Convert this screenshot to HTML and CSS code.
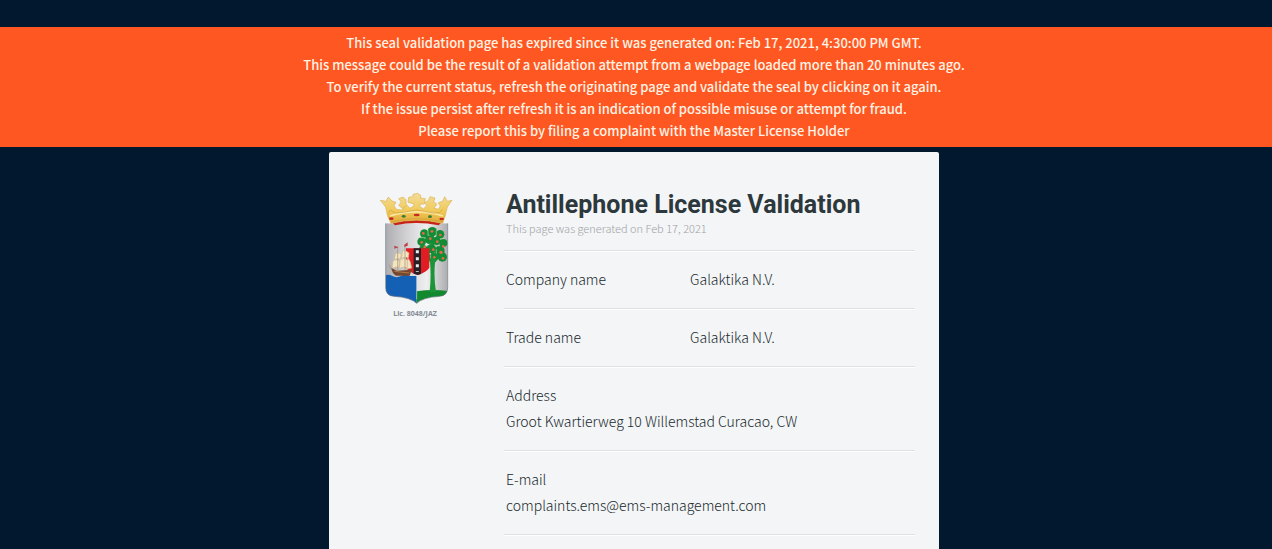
FILE: index.html
```html
<!DOCTYPE html>
<html lang="en">
<head>
<meta charset="utf-8">
<title>Antillephone License Validation</title>
<link rel="stylesheet" href="styles.css">
</head>
<body>
<div class="page">
  <div class="banner" role="alert">
    <p>This seal validation page has expired since it was generated on: Feb 17, 2021, 4:30:00 PM GMT.</p>
    <p>This message could be the result of a validation attempt from a webpage loaded more than 20 minutes ago.</p>
    <p>To verify the current status, refresh the originating page and validate the seal by clicking on it again.</p>
    <p>If the issue persist after refresh it is an indication of possible misuse or attempt for fraud.</p>
    <p>Please report this by filing a complaint with the Master License Holder</p>
  </div>
  <div class="content">
  <main class="card">
    <div class="seal">
      <svg class="arms" viewBox="0 0 270 360" aria-hidden="true">
        <defs>
          <linearGradient id="silver" x1="0" x2="1">
            <stop offset="0" stop-color="#a9a9ad"/><stop offset=".35" stop-color="#d2d2d5"/><stop offset=".65" stop-color="#efeff0"/><stop offset="1" stop-color="#a5a5a8"/>
          </linearGradient>
          <linearGradient id="gold" x1="0" x2="0" y1="0" y2="1">
            <stop offset="0" stop-color="#f3dc9a"/><stop offset=".6" stop-color="#f0ca58"/><stop offset="1" stop-color="#dfa834"/>
          </linearGradient>
          <clipPath id="shield"><path d="M47 112H233V305Q233 329 208 331Q158 334 140 352Q122 334 72 331Q47 329 47 305Z"/></clipPath>
        </defs>
        <g clip-path="url(#shield)">
          <path fill="url(#silver)" d="M40 105H240V355H40Z"/>
          <path fill="#1460b4" d="M40 270Q55 263 67 270T93 270T120 270H140V355H40Z"/>
          <path fill="#12882f" d="M140 316Q190 308 240 316V355H140Z"/>
          <path fill="none" stroke="#fff" stroke-width="2" opacity=".6" d="M140 262V340"/>
        </g>
        <path fill="none" stroke="#64727c" stroke-width="2" d="M47 112V305Q47 329 72 331Q122 334 140 352Q158 334 208 331Q233 329 233 305V112"/>
        <path fill="#1c9438" d="M179 318Q184 270 180 228L158 205L165 200L183 216V145H192V216L208 201L214 207L195 230Q191 275 198 318Z"/>
        <g fill="#158b35">
          <circle cx="163" cy="143" r="13"/><circle cx="187" cy="137" r="14"/><circle cx="210" cy="145" r="13"/><circle cx="155" cy="167" r="13"/><circle cx="178" cy="161" r="13"/><circle cx="199" cy="165" r="13"/><circle cx="220" cy="171" r="12"/><circle cx="160" cy="190" r="13"/><circle cx="184" cy="188" r="14"/><circle cx="209" cy="194" r="15"/><circle cx="217" cy="213" r="14"/><circle cx="197" cy="210" r="11"/><circle cx="173" cy="209" r="9"/>
        </g>
        <g fill="none" stroke="#a6d5a8" stroke-width="2">
          <path d="M174 132V149M199 132V150M150 155L166 155M166 177L175 178M192 177L209 180M171 202L180 205M199 190V203M211 158L222 158"/>
        </g>
        <g fill="#e8694a">
          <circle cx="160" cy="142" r="4"/><circle cx="186" cy="136" r="4"/><circle cx="211" cy="147" r="4"/><circle cx="155" cy="169" r="4"/><circle cx="181" cy="158" r="4"/><circle cx="202" cy="167" r="4"/><circle cx="220" cy="181" r="4"/><circle cx="164" cy="183" r="4"/><circle cx="190" cy="191" r="4"/><circle cx="213" cy="199" r="5"/><circle cx="219" cy="217" r="4"/><circle cx="193" cy="214" r="4"/>
        </g>
        <path fill="#e31b23" d="M108 187H178V244Q175 257 143 267Q111 257 108 244Z"/>
        <path fill="#272125" d="M131 187H153V264L143 267L131 263Z"/>
        <path stroke="#eee" stroke-width="9" stroke-dasharray="9 12" d="M142 193V258"/>
        <g fill="#f2e5c1" stroke="#cbb690" stroke-width="2">
          <path d="M76 203Q87 197 94 205L91 219Q82 216 73 221Z"/><path d="M98 194Q109 193 117 201L115 216Q105 211 94 217Z"/><path d="M69 224Q80 217 89 226L86 245Q76 240 66 248Z"/><path d="M91 220Q105 214 114 224L112 247Q100 239 88 248Z"/><path d="M113 216Q122 223 125 246L111 249Z"/>
        </g>
        <path fill="none" stroke="#a58b70" stroke-width="2" d="M83 180V252M105 178V252M66 251L56 236"/>
        <path fill="#bc3f42" d="M73 179L85 184L73 188ZM103 176L113 169V179L103 183Z"/>
        <path fill="#74482e" d="M64 246L80 254L125 251L119 269H78Q66 262 64 246Z"/>
        <path fill="none" stroke="#c69451" stroke-width="2" d="M73 256L118 261"/>
        <path fill="#c52417" d="M68 111Q138 93 213 111L206 118Q138 104 75 118Z"/>
        <g fill="url(#gold)" stroke="#dcb452" stroke-width="2">
          <path d="M53 91L47 63L31 43L48 46L55 33L66 45L78 49L72 59L79 70L97 72L106 60L98 68L86 58L94 48L86 38L99 33L108 41L108 54L120 67L132 59L130 53L114 49L116 34L129 32L129 25L143 22L153 29L151 36L166 38L163 54L149 55L150 62L161 69L170 58L164 50L175 44L180 32L195 36L191 47L201 55L192 66L205 70L211 60L205 50L218 46L224 32L232 46L246 43L232 63L225 91L218 112Q140 93 63 112Z"/>
        </g>
        <path fill="none" stroke="#f9e6a1" stroke-width="5" d="M60 90Q139 65 219 90"/>
        <path fill="none" stroke="#cf9d3c" stroke-width="2" d="M55 82L61 72L76 81L99 79L116 76L140 72L164 76L190 81L208 80L218 70M64 108Q140 87 218 108"/>
        <g fill="#c52b21"><ellipse cx="64" cy="98" rx="7" ry="4"/><ellipse cx="140" cy="87" rx="9" ry="4"/><ellipse cx="215" cy="99" rx="7" ry="4"/></g>
        <g fill="#3b7c35"><ellipse cx="101" cy="91" rx="6" ry="4"/><ellipse cx="180" cy="92" rx="6" ry="4"/></g>
      </svg>
      <p class="license">Lic. 8048/JAZ</p>
    </div>
    <div class="details">
      <header class="heading">
        <h1>Antillephone License Validation</h1>
        <p>This page was generated on Feb 17, 2021</p>
      </header>
      <dl class="fields">
        <div class="row split"><dt>Company name</dt><dd>Galaktika N.V.</dd></div>
        <div class="row split"><dt>Trade name</dt><dd>Galaktika N.V.</dd></div>
        <div class="row"><dt>Address</dt><dd>Groot Kwartierweg 10 Willemstad Curacao, CW</dd></div>
        <div class="row"><dt>E-mail</dt><dd>complaints.ems@ems-management.com</dd></div>
      </dl>
    </div>
  </main>
  </div>
</div>
</body>
</html>
```
FILE: styles.css
```css
* { box-sizing: border-box; }
body, h1, p, dl, dd { margin: 0; }
body {
  background: #02182f;
  color: #20282b;
  font: 300 14px/26px "Noto Sans CJK SC", "Open Sans", sans-serif;
}
.page {
  min-height: 100vh;
  padding-top: 27px;
  display: flex;
  flex-direction: column;
}
.banner {
  padding: 5px 4px 5px 0;
  background: #ff5722;
  color: #fff3e4;
  font-size: 13px;
  font-weight: 500;
  line-height: 22px;
  text-align: center;
}
.content {
  flex: 1;
  padding: 5px 4px 0 0;
  display: flex;
  justify-content: center;
}
.card {
  width: 100%;
  max-width: 610px;
  padding-right: 24px;
  display: grid;
  grid-template-columns: 175px 1fr;
  background: #f3f5f7;
  border-radius: 2px 2px 0 0;
}
.seal {
  padding: 34px 3px 0 0;
  display: flex;
  flex-direction: column;
  align-items: center;
}
.arms { width: 90px; height: 120px; }
.license {
  color: #858b95;
  font: 700 7px/16px "Open Sans", sans-serif;
}
.heading, .row {
  padding-left: 2px;
  border-bottom: 1px solid #dde0e4;
  box-shadow: 0 1px 0 #fff;
}
.heading { padding-top: 37px; padding-bottom: 15px; }
.heading h1 {
  color: #2d383c;
  font: 700 25px/32px Roboto, sans-serif;
}
.heading p {
  color: #a0a3a6;
  font-size: 11px;
  line-height: 14px;
}
.row { padding-top: 15px; padding-bottom: 16px; }
.split { display: grid; grid-template-columns: 45% 1fr; }
```
